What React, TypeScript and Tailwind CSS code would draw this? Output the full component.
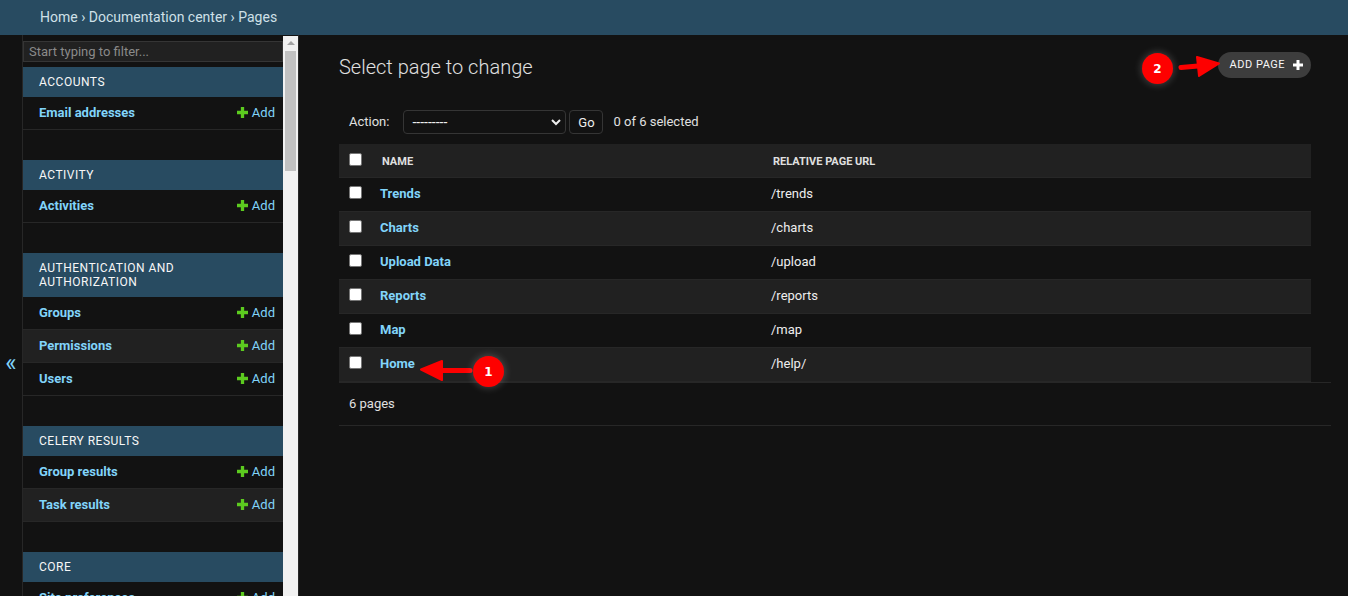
import React from 'react';

interface AdminRow {
  name: string;
}

interface AdminGroup {
  title: string;
  rows: AdminRow[];
}

const groups: AdminGroup[] = [
  { title: 'Accounts', rows: [{ name: 'Email addresses' }] },
  { title: 'Activity', rows: [{ name: 'Activities' }] },
  {
    title: 'Authentication and Authorization',
    rows: [{ name: 'Groups' }, { name: 'Permissions' }, { name: 'Users' }],
  },
  { title: 'Celery Results', rows: [{ name: 'Group results' }, { name: 'Task results' }] },
  { title: 'Core', rows: [{ name: 'Site preferences' }] },
];

const pages = [
  { name: 'Trends', url: '/trends' },
  { name: 'Charts', url: '/charts' },
  { name: 'Upload Data', url: '/upload' },
  { name: 'Reports', url: '/reports' },
  { name: 'Map', url: '/map' },
  { name: 'Home', url: '/help/' },
];

function PlusIcon({ color, size }: { color: string; size: number }) {
  return (
    <svg width={size} height={size} viewBox="0 0 10 10" className="shrink-0">
      <path d="M3.5 0h3v3.5H10v3H6.5V10h-3V6.5H0v-3h3.5z" fill={color} />
    </svg>
  );
}

function Checkbox() {
  return <span className="block w-[13px] h-[13px] rounded-[2px] bg-white border border-[#767676]" />;
}

function Badge({ label, className }: { label: string; className: string }) {
  return (
    <div
      className={`absolute w-[31px] h-[31px] rounded-full bg-[#fe0000] text-white font-['DejaVu_Sans',sans-serif] text-[12px] font-bold flex items-center justify-center shadow-[0_0_8px_rgba(255,255,255,0.25)] ${className}`}
    >
      {label}
    </div>
  );
}

function Sidebar() {
  return (
    <div className="w-[260px] shrink-0 overflow-hidden">
      <div className="pt-[6px] pb-[5px]">
        <div className="h-[21px] bg-[#212121] border border-[#353535] px-[5px] text-[13px] leading-[19px] text-[#8a8a8a]">
          Start typing to filter...
        </div>
      </div>
      {groups.map((group) => (
        <div key={group.title} className="mb-[30px]">
          <div className="bg-[#284b61] text-[#f7f7f7] text-[12px] leading-[14px] uppercase tracking-[0.5px] pl-[16px] pr-[16px] py-[8px]">
            {group.title}
          </div>
          {group.rows.map((row, i) => (
            <div
              key={row.name}
              className={`h-[33px] flex items-center justify-between pl-[16px] pr-[8px] border-b border-[#272727] ${
                i % 2 === 1 ? 'bg-[#212121]' : ''
              }`}
            >
              <span className="text-[13px] font-bold text-[#81d4fa]">{row.name}</span>
              <span className="flex items-center gap-[4px] text-[13px] text-[#81d4fa]">
                <span className="-mt-px">
                  <PlusIcon color="#5ccb1f" size={11} />
                </span>
                Add
              </span>
            </div>
          ))}
        </div>
      ))}
    </div>
  );
}

function Scrollbar() {
  return (
    <div className="w-[15px] shrink-0 bg-[#f1f1f1] mt-px pt-[5px] flex flex-col items-center">
      <div className="w-0 h-0 border-x-[4px] border-x-transparent border-b-[4px] border-b-[#a3a3a3]" />
      <div className="w-[11px] h-[120px] bg-[#c1c1c1] mt-[6px]" />
    </div>
  );
}

function ChangeList() {
  return (
    <div className="flex-1 min-w-0 pl-[40px] pr-[17px] relative">
      <div className="flex items-start justify-between pt-[18px] pr-[20px] h-[74px]">
        <h1 className="text-[20px] font-light leading-[28px] text-[#e0e0e0]">Select page to change</h1>
        <div className="h-[26px] -mt-[1px] rounded-[15px] bg-[#3d3d3d] flex items-center pl-[12px] pr-[8px] gap-[8px] text-[#f7f7f7] text-[11px] tracking-[0.5px]">
          ADD PAGE
          <PlusIcon color="#ffffff" size={10} />
        </div>
      </div>

      <div className="pr-[20px]">
        <div className="h-[36px] flex items-start pt-px pl-[10px] text-[13px] text-[#e0e0e0]">
          <span className="leading-[24px]">Action:</span>
          <div className="ml-[14px] w-[163px] h-[24px] rounded-[4px] border border-[#353535] bg-[#121212] flex items-center justify-between pl-[8px] pr-[3px]">
            <span className="text-[14px] text-[#eeeeee]">---------</span>
            <svg width="12" height="12" viewBox="0 0 12 12">
              <path d="M2 4l4 4 4-4" fill="none" stroke="#eeeeee" strokeWidth="2" />
            </svg>
          </div>
          <div className="ml-[3px] w-[34px] h-[24px] rounded-[4px] border border-[#353535] flex items-center justify-center text-[#eeeeee] pt-px">
            Go
          </div>
          <span className="ml-[10px] leading-[24px]">0 of 6 selected</span>
        </div>

        <div className="h-[34px] mt-[-1px] bg-[#212121] flex items-center border-b border-[#272727] text-[11px] font-bold text-[#e0e0e0]">
          <div className="w-[43px] pl-[10px] -mt-[2px]">
            <Checkbox />
          </div>
          <div className="w-[391px] mt-[4px]">NAME</div>
          <div className="mt-[4px]">RELATIVE PAGE URL</div>
        </div>
        {pages.map((page, i) => (
          <div
            key={page.name}
            className={`h-[34px] pb-[2px] flex items-center border-b border-[#272727] text-[13px] ${
              i % 2 === 1 ? 'bg-[#212121]' : ''
            }`}
          >
            <div className="w-[41px] pl-[10px] -mt-[3px]">
              <Checkbox />
            </div>
            <div className="w-[391px] font-bold text-[#81d4fa]">{page.name}</div>
            <div className="text-[#eeeeee]">{page.url}</div>
          </div>
        ))}
      </div>

      <div className="h-[44px] border-t border-b border-[#272727] flex items-center pl-[10px] text-[13px] text-[#e0e0e0]">
        6 pages
      </div>
    </div>
  );
}

export default function App() {
  return (
    <div className="relative w-[1348px] h-[596px] overflow-hidden bg-[#121212] font-['Roboto',sans-serif]">
      <div className="h-[35px] bg-[#284b61] pl-[40px] flex items-center text-[14px] text-[#cfe0e8]">
        Home › Documentation center › Pages
      </div>
      <div className="flex h-[561px]">
        <div className="w-[23px] shrink-0 border-r border-[#272727] pt-[314px] text-center text-[#81d4fa] text-[24px] leading-[28px]">
          «
        </div>
        <Sidebar />
        <Scrollbar />
        <div className="w-px shrink-0 bg-[#272727]" />
        <ChangeList />
      </div>

      {/* annotations on top of the screenshot */}
      <svg className="absolute left-0 top-0 pointer-events-none" width="1348" height="596">
        <path d="M1181 67.5 L1198 66" stroke="#fe0000" strokeWidth="5" strokeLinecap="round" />
        <path d="M1197 57 L1219 63.5 L1199 76 Z" fill="#fe0000" stroke="#fe0000" strokeWidth="2" strokeLinejoin="round" />
        <path d="M470 370.5 L442 370.5" stroke="#fe0000" strokeWidth="5" strokeLinecap="round" />
        <path d="M442 361 L421 369.5 L442 380 Z" fill="#fe0000" stroke="#fe0000" strokeWidth="2" strokeLinejoin="round" />
      </svg>
      <Badge label="2" className="left-[1142px] top-[53px]" />
      <Badge label="1" className="left-[473px] top-[356px]" />
    </div>
  );
}
